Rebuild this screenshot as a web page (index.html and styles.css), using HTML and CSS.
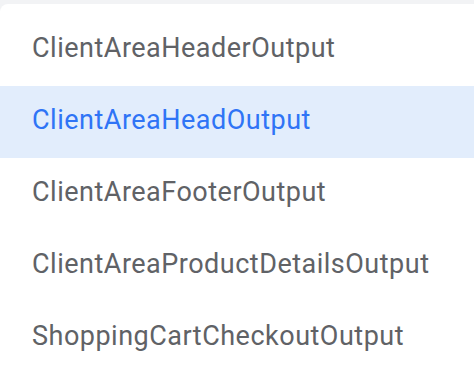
FILE: index.html
```html
<!DOCTYPE html>
<html lang="en">
<head>
  <meta charset="UTF-8">
  <meta name="viewport" content="width=device-width, initial-scale=1.0">
  <title>Hook list</title>
  <link rel="stylesheet" href="styles.css">
</head>
<body>
  <ul class="dropdown">
    <li class="item">ClientAreaHeaderOutput</li>
    <li class="item active">ClientAreaHeadOutput</li>
    <li class="item">ClientAreaFooterOutput</li>
    <li class="item">ClientAreaProductDetailsOutput</li>
    <li class="item">ShoppingCartCheckoutOutput</li>
  </ul>
</body>
</html>
```

FILE: styles.css
```css
html, body {
  margin: 0;
  padding: 0;
  background-color: #f2f3f5;
  height: 100%;
}
body {
  padding-top: 4px;
  box-sizing: border-box;
}
.dropdown {
  list-style: none;
  margin: 0;
  padding: 10px 0 16px;
  background: white;
  border-radius: 8px 0 0 0;
  height: 100%;
  box-sizing: border-box;
  font-family: Roboto, "Liberation Sans", sans-serif;
  font-size: 27px;
  letter-spacing: 0.5px;
}
.item {
  height: 72px;
  line-height: 68px;
  padding: 0 32px 4px;
  box-sizing: border-box;
  color: #606266;
  white-space: nowrap;
}
.item.active {
  background-color: #e2edfc;
  color: #2f74f6;
}
```
